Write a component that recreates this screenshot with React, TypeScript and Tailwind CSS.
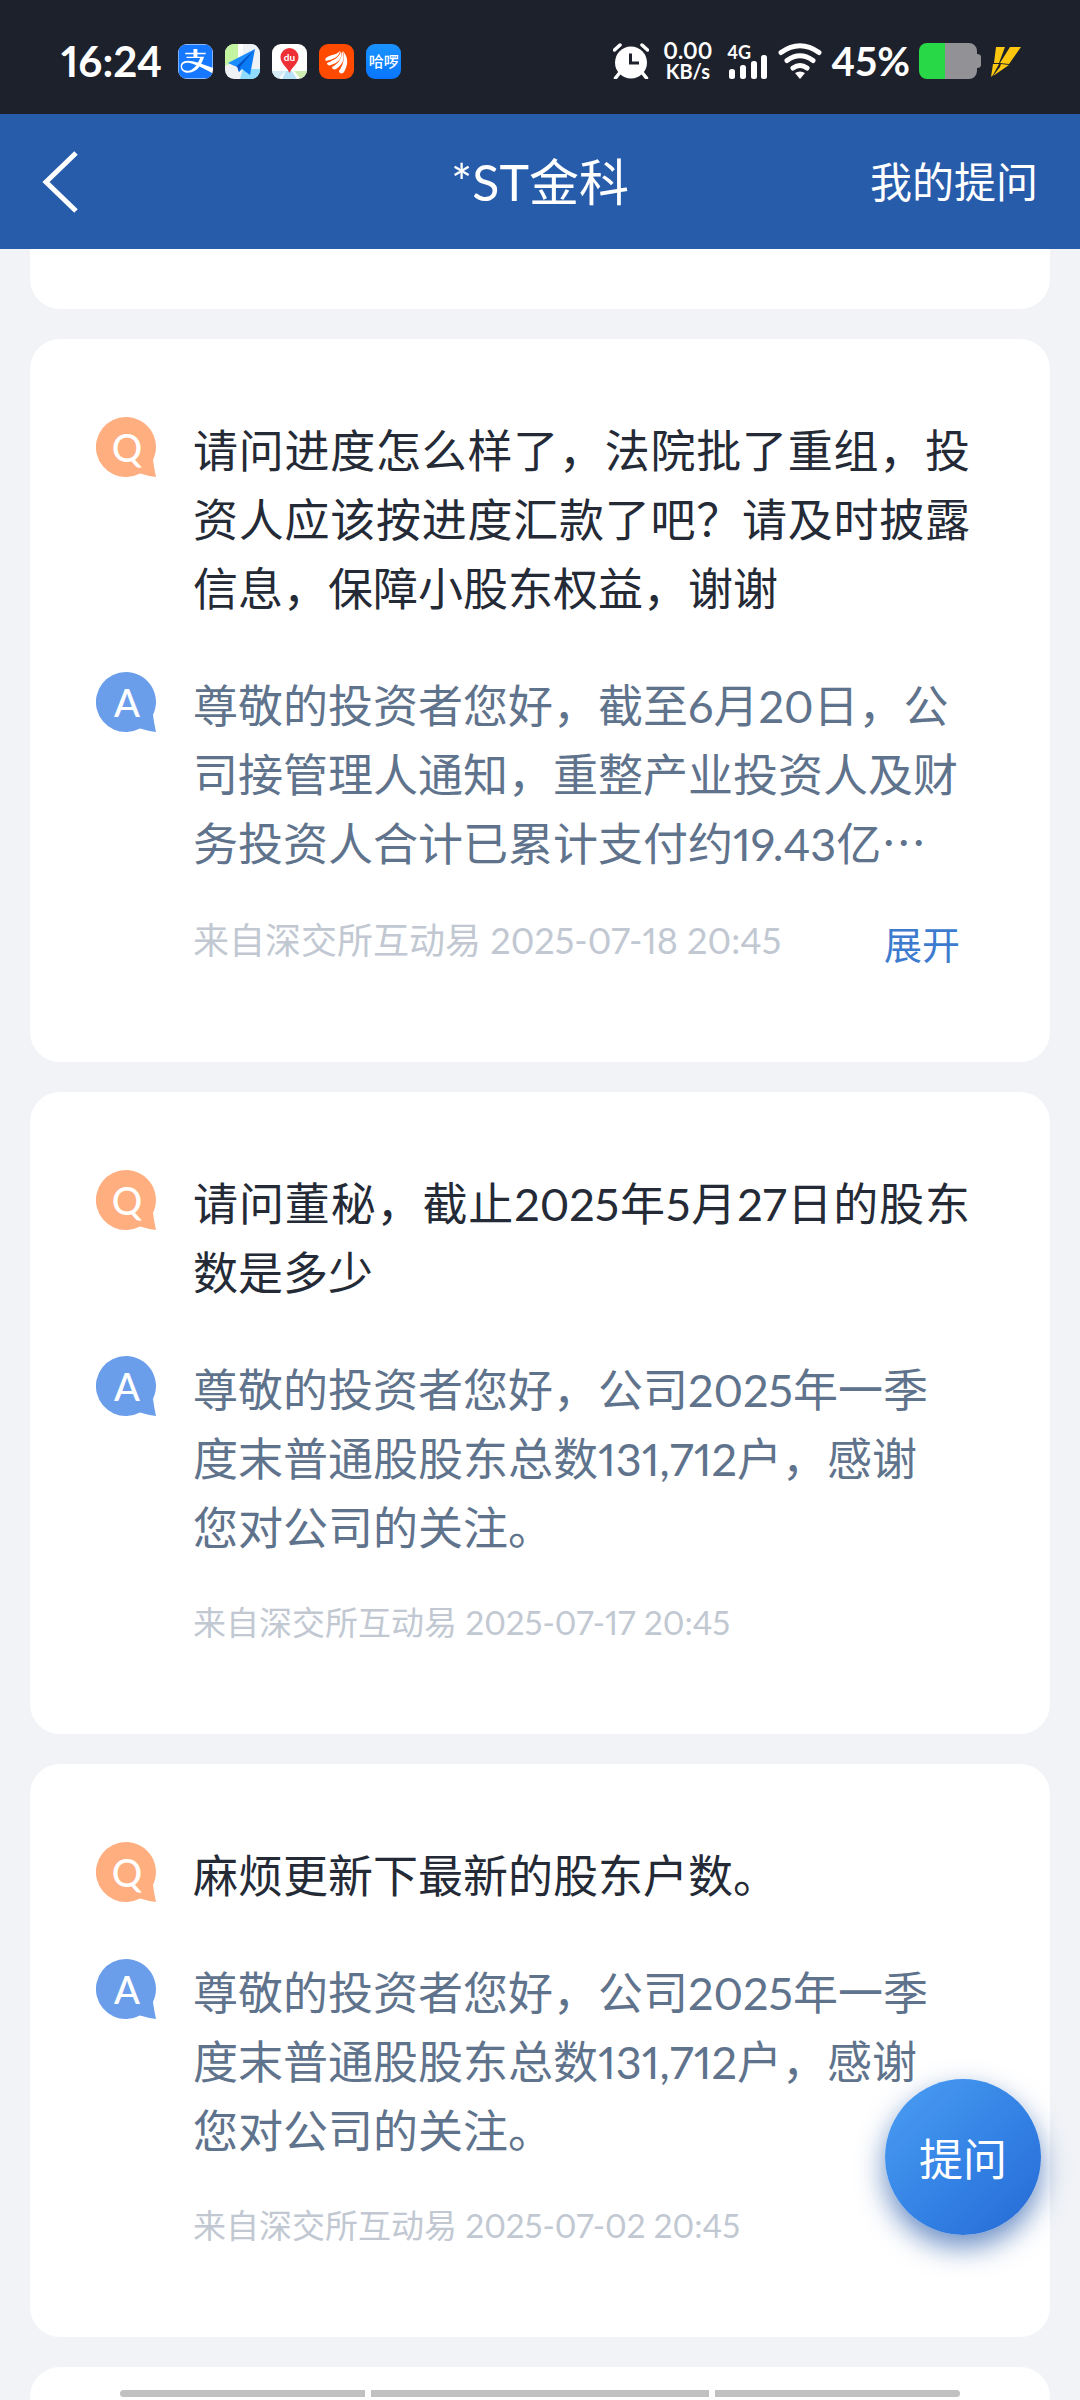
import type { ReactNode } from "react";
import { FaAlipay } from "react-icons/fa";

type Entry = {
  question: string;
  answer: string;
  date: string;
  collapsed?: boolean;
};

const SOURCE = "来自深交所互动易";

const entries: Entry[] = [
  {
    question: "请问进度怎么样了，法院批了重组，投资人应该按进度汇款了吧？请及时披露信息，保障小股东权益，谢谢",
    answer: "尊敬的投资者您好，截至6月20日，公司接管理人通知，重整产业投资人及财务投资人合计已累计支付约19.43亿⋯",
    date: "2025-07-18 20:45",
    collapsed: true,
  },
  {
    question: "请问董秘，截止2025年5月27日的股东数是多少",
    answer: "尊敬的投资者您好，公司2025年一季度末普通股股东总数131,712户，感谢您对公司的关注。",
    date: "2025-07-17 20:45",
  },
  {
    question: "麻烦更新下最新的股东户数。",
    answer: "尊敬的投资者您好，公司2025年一季度末普通股股东总数131,712户，感谢您对公司的关注。",
    date: "2025-07-02 20:45",
  },
];

function AppIcon({ className, children }: { className: string; children: ReactNode }) {
  return (
    <span className={`flex h-[35px] w-[35px] items-center justify-center overflow-hidden rounded-[9px] ${className}`}>
      {children}
    </span>
  );
}

function StatusBar() {
  return (
    <div className="flex h-[114px] shrink-0 items-center justify-between bg-[#1d212b] pt-2 pr-[59px] pl-[61px] text-white">
      <div className="flex items-center gap-3">
        <span className="mr-1 text-[42px] leading-[48px] font-bold">16:24</span>
        <AppIcon className="bg-white">
          <FaAlipay className="h-[39px] w-[39px] shrink-0 text-[#1677ff]" />
        </AppIcon>
        <AppIcon className="bg-[#eef2f5]">
          <svg viewBox="0 0 35 35" className="h-full w-full">
            <path d="M0 0h13v16L0 22z" fill="#c3f5a0" />
            <path d="M18 25h17v10H15z" fill="#8fdcff" />
            <path d="M13 0h5v12l-5 4z" fill="#fff" />
            <path d="M30 5 3 19l9 4z" fill="#1b8dff" />
            <path d="M30 5 12 22l2 6 3-3 8 6z" fill="#0a7cf5" />
            <path d="M30 5 12 22l2 6 1-5z" fill="#0552c8" />
          </svg>
        </AppIcon>
        <AppIcon className="bg-white">
          <svg viewBox="0 0 35 35" className="h-full w-full">
            <path d="M0 27h14l-8 8H0z" fill="#d3ecf8" />
            <path d="M14 27h6l5 8H10z" fill="#b5e2f8" />
            <path d="M22 27h13v8h-6z" fill="#cdeeb0" />
            <path d="M17.500 29c-2-6-9-9-9-16a9 9 0 0 1 18 0c0 7-7 10-9 16z" fill="#ee2f35" />
            <text x="17.500" y="17" textAnchor="middle" fontSize="10" fontWeight="700" fill="#fff">
              du
            </text>
          </svg>
        </AppIcon>
        <AppIcon className="bg-[#ff4a00]">
          <svg viewBox="0 0 35 35" className="h-full w-full" fill="#fff">
            <path d="M7 14c5-4 9-2 14-7-1 6-6 8-14 10-1-1-1-2 0-3z" />
            <path d="M8 19c7-3 12-5 14-12 2 7-3 12-10 14-2 1-4 0-4-2z" />
            <path d="M13 23c6-3 10-8 10-16 4 8 0 14-6 18-2 1-4 0-4-2z" />
            <path d="M20 27c4-6 6-12 4-20 6 7 5 14 1 21-1 2-5 2-5-1z" />
          </svg>
        </AppIcon>
        <AppIcon className="bg-linear-to-b from-[#1a93ff] to-[#0a75ff]">
          <span className="text-[15px] leading-[20px] font-medium">哈啰</span>
        </AppIcon>
      </div>

      <div className="flex items-center">
        <svg viewBox="0 0 36 36" className="h-[36px] w-[36px]">
          <circle cx="18" cy="19.500" r="16" fill="#fff" />
          <path d="m6.500 30-4 5M29.500 30l4 5" stroke="#fff" strokeWidth="3.500" strokeLinecap="round" />
          <path d="M1.500 7 7 2M34.500 7 29 2" stroke="#fff" strokeWidth="3.500" strokeLinecap="round" />
          <path d="M17.500 10.500v9.500h8.500" fill="none" stroke="#1d212b" strokeWidth="3" />
        </svg>
        <span className="ml-[14px] flex flex-col items-center text-[20px] leading-[20px] font-bold">
          <span className="text-[22px]">0.00</span>
          <span>KB/s</span>
        </span>
        <span className="ml-[15px] flex flex-col">
          <span className="text-[18px] leading-[18px] font-bold">4G</span>
          <svg viewBox="0 0 40 24" className="-mt-1.5 h-[24px] w-[40px]" fill="#fff">
            <rect x="2" y="14" width="6" height="10" rx="2.500" />
            <rect x="13" y="10" width="6" height="14" rx="2.500" />
            <rect x="24" y="6" width="6" height="18" rx="2.500" />
            <rect x="34" y="0" width="6" height="24" rx="2.500" />
          </svg>
        </span>
        <svg viewBox="0 0 44 37" className="ml-[11px] h-[37px] w-[44px]" fill="none" stroke="#fff" strokeWidth="5" strokeLinecap="round">
          <path d="M3 9.500Q22-4 41 9.500" />
          <path d="M9 17.500q13-9.500 26 0" />
          <path d="M15 25q7-5 14 0" />
          <path d="M17 30q5-3 10 0l-5 6z" fill="#fff" stroke="none" />
        </svg>
        <span className="ml-[9px] text-[40px] leading-[48px] font-bold">45%</span>
        <svg viewBox="0 0 62 36" className="ml-[9px] h-[36px] w-[62px]">
          <path d="M8 0h18v36H8a8 8 0 0 1-8-8V8a8 8 0 0 1 8-8z" fill="#29d847" />
          <path d="M26 0h24a8 8 0 0 1 8 8v3q4 0 4 3v8q0 3-4 3v3a8 8 0 0 1-8 8H26z" fill="#919196" />
        </svg>
        <svg viewBox="0 0 30 31" className="ml-[10px] h-[31px] w-[30px]" fill="#fbc80f">
          <path d="M5 1h9L8 17H3z" />
          <path d="M19 1h11L18 18l-9-1z" />
          <path d="M2 18h6L2 29l-2 2zM10 18l8 1L2 30l7-9z" />
        </svg>
      </div>
    </div>
  );
}

function Bubble({ letter, className }: { letter: string; className: string }) {
  return (
    <svg viewBox="0 0 60 60" className={`h-[60px] w-[60px] shrink-0 ${className}`} fill="currentColor">
      <path d="M30 0a30 30 0 0 1 27 43q1 8 3 17-8-1-16-3.500A30 30 0 1 1 30 0z" />
      <text x="31" y="45" textAnchor="middle" fontSize="38" fontWeight="500" fill="#fff">
        {letter}
      </text>
    </svg>
  );
}

function QaCard({ entry }: { entry: Entry }) {
  return (
    <article className="rounded-[30px] bg-white pt-[78px] pr-[80px] pb-[89px] pl-[66px]">
      <div className="flex gap-[37px]">
        <Bubble letter="Q" className="text-[#ffae80]" />
        <p className="flex-1 text-justify text-[45px] leading-[69px] text-[#242a36]">{entry.question}</p>
      </div>
      <div className="mt-12 flex gap-[37px]">
        <Bubble letter="A" className="text-[#6a9eea]" />
        <div className="flex-1 pr-[10px]">
          <p className="text-[45px] leading-[69px] text-[#5f738c]">{entry.answer}</p>
          {entry.collapsed ? (
            <div className="mt-9 flex items-start justify-between pb-1">
              <span className="text-[36px] leading-[50px] text-[#c1c8d2]">
                {SOURCE} {entry.date}
              </span>
              <button className="mt-1 text-[38px] leading-[50px] text-[#3d7bcf]">展开</button>
            </div>
          ) : (
            <div className="mt-9 text-[33px] leading-[46px] text-[#c1c8d2]">
              {SOURCE} {entry.date}
            </div>
          )}
        </div>
      </div>
    </article>
  );
}

export default function App() {
  return (
    <div
      lang="zh-CN"
      className="relative flex h-screen flex-col overflow-hidden bg-[#f1f3f7] font-['Lato','Noto_Sans_CJK_SC',sans-serif] proportional-nums"
    >
      <StatusBar />
      <header className="grid h-[135px] shrink-0 grid-cols-[1fr_auto_1fr] items-center bg-[#275cab] px-[42px] text-white">
        <button aria-label="返回" className="justify-self-start">
          <svg viewBox="0 0 36 62" className="h-[62px] w-[36px]" fill="none" stroke="#fff" strokeWidth="5">
            <path d="M34 2 4 31l30 29" />
          </svg>
        </button>
        <h1 className="text-[50px] leading-[68px]">*ST金科</h1>
        <a href="#mine" className="justify-self-end text-[42px] leading-[60px]">
          我的提问
        </a>
      </header>

      <main className="flex flex-1 flex-col gap-[30px] overflow-hidden px-[30px]">
        <div className="h-[60px] shrink-0 rounded-b-[30px] bg-white" />
        {entries.map((entry) => (
          <QaCard key={entry.date} entry={entry} />
        ))}
        <div className="flex-1 rounded-t-[30px] bg-white" />
      </main>

      <button className="absolute right-[39px] bottom-[165px] h-[156px] w-[156px] rounded-full bg-linear-to-br from-[#4596ef] from-15% via-[#3584e6] to-[#286fd8] to-90% pt-1 text-[44px] text-white shadow-[0_12px_28px_rgba(25,80,165,0.65)]">
        提问
      </button>

      {/* gesture bar */}
      <div className="absolute inset-x-[120px] bottom-[3px] flex h-[7px] gap-[6px]">
        <span className="w-[245px] rounded-l-full bg-[#c1c1c1]" />
        <span className="flex-1 bg-[#c1c1c1]" />
        <span className="w-[245px] rounded-r-full bg-[#c1c1c1]" />
      </div>
    </div>
  );
}
